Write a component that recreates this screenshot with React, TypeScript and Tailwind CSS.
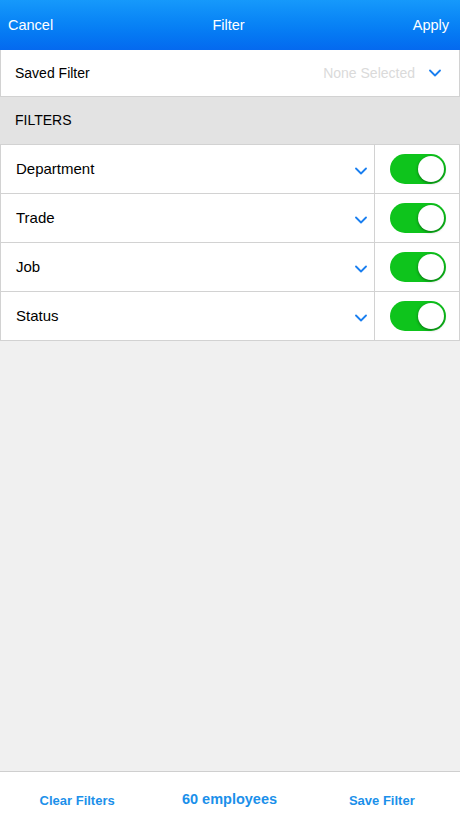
const Chevron = ({ className = "" }: { className?: string }) => (
  <svg viewBox="0 0 12 8" className={`w-[12px] h-[8px] ${className}`} fill="none">
    <path d="M1 1.5 L6 6.5 L11 1.5" stroke="#1a7ff0" strokeWidth="1.8" strokeLinecap="round" strokeLinejoin="round" />
  </svg>
);

const Toggle = () => (
  <div className="relative w-[56px] h-[30px] rounded-full bg-[#0ec41c]">
    <div className="absolute right-[2px] top-[2px] w-[26px] h-[26px] rounded-full bg-white shadow-[0_1px_3px_rgba(0,0,0,0.45)]" />
  </div>
);

const filters = ["Department", "Trade", "Job", "Status"];

export default function App() {
  return (
    <div
      className="w-[460px] h-[818px] flex flex-col bg-[#f0f0f0] text-black"
      style={{ fontFamily: '"Liberation Sans", Arial, sans-serif' }}
    >
      {/* header */}
      <div className="h-[50px] shrink-0 flex items-center px-[8px] pt-[2px] bg-gradient-to-b from-[#1699fb] to-[#0569ef] text-white text-[14.5px]">
        <span className="flex-1">Cancel</span>
        <span>Filter</span>
        <span className="flex-1 text-right pr-[3px]">Apply</span>
      </div>

      <div className="flex-1">
        {/* saved filter */}
        <div className="h-[47px] flex items-center bg-white border border-t-0 border-[#d2d2d2] pl-[14px] pr-[18px]">
          <span className="text-[14px] flex-1">Saved Filter</span>
          <span className="text-[14px] text-[#dadada] mr-[14px]">None Selected</span>
          <Chevron />
        </div>

        {/* filters header */}
        <div className="h-[47px] flex items-center bg-[#e3e3e3] pl-[15px] text-[14px]">FILTERS</div>

        {/* rows */}
        <div className="border-t border-[#d2d2d2]">
          {filters.map((f) => (
            <div key={f} className="h-[49px] flex bg-white border-x border-b border-[#d2d2d2]">
              <div className="flex-1 flex items-center pl-[15px] pr-[7px] border-r border-[#d2d2d2]">
                <span className="text-[15px] flex-1">{f}</span>
                <Chevron className="mt-[4px]" />
              </div>
              <div className="w-[84px] flex items-center pl-[15px]">
                <Toggle />
              </div>
            </div>
          ))}
        </div>
      </div>

      {/* footer */}
      <div className="h-[47px] shrink-0 grid grid-cols-3 items-center bg-white border-t border-[#cfcfcf] font-bold text-[#1b90ea] pt-[12px]">
        <span className="text-[13px] text-center pl-[1px]">Clear Filters</span>
        <span className="text-[14.5px] text-center -mt-[3px] -ml-[1px]">60 employees</span>
        <span className="text-[13px] text-center pr-[3px]">Save Filter</span>
      </div>
    </div>
  );
}
